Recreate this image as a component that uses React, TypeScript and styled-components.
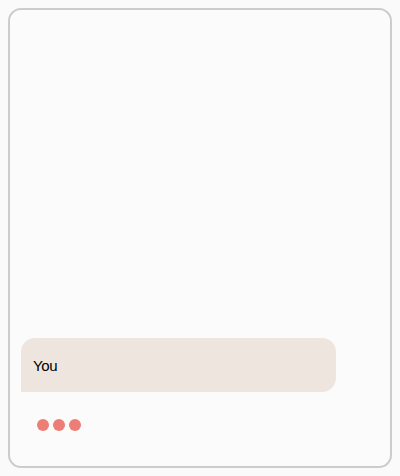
import React from 'react';
import styled, { createGlobalStyle } from 'styled-components';

const GlobalStyle = createGlobalStyle`
  html, body {
    margin: 0;
    padding: 0;
    background: #fafafa;
    font-family: 'Liberation Sans', Arial, sans-serif;
  }
  body {
    padding: 8px;
  }
`;

const Frame = styled.div`
  box-sizing: border-box;
  width: 384px;
  height: 460px;
  border: 2px solid #cdcbcb;
  border-radius: 13px;
  background: #fcfbfc;
  display: flex;
  flex-direction: column;
  justify-content: flex-end;
  padding: 0 0 35px 11px;
`;

const Bubble = styled.div`
  box-sizing: border-box;
  width: 315px;
  height: 54px;
  background: #efe5df;
  border-radius: 14px 14px 14px 0;
  padding: 0 12px;
  display: flex;
  align-items: center;
  font-size: 15px;
  letter-spacing: -0.3px;
  color: #000;
`;

const Typing = styled.div`
  display: flex;
  gap: 4px;
  margin-top: 27px;
  padding-left: 16px;
`;

const Dot = styled.span`
  width: 12px;
  height: 12px;
  border-radius: 50%;
  background: #ec7e76;
`;

export default function App() {
  return (
    <>
      <GlobalStyle />
      <Frame>
        <Bubble>You</Bubble>
        <Typing>
          <Dot />
          <Dot />
          <Dot />
        </Typing>
      </Frame>
    </>
  );
}
